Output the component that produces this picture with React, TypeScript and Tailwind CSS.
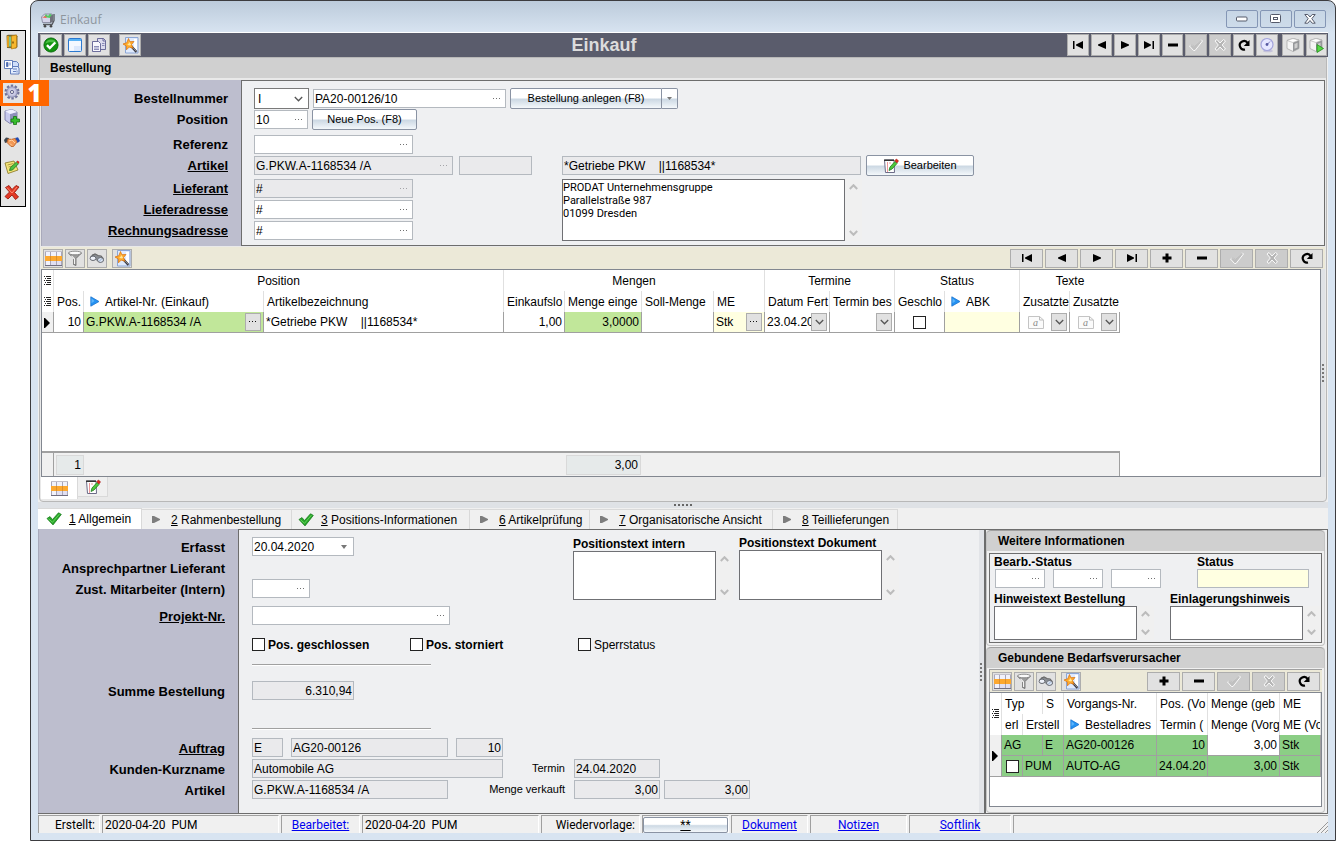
import type { ReactNode } from "react";

const arial = "font-['Liberation_Sans',Arial,sans-serif]";
const fieldBorder = "border border-[#b4b9bf]";

/* ---------- icons ---------- */

function Dots({ color = "#707070" }: { color?: string }) {
  return (
    <svg width="8" height="2" viewBox="0 0 8 2" fill={color} aria-hidden>
      <rect x="0" width="1" height="1" />
      <rect x="3" width="1" height="1" />
      <rect x="6" width="1" height="1" />
    </svg>
  );
}

function Chevron({ up = false, color = "#555", weight = "1.3" }: { up?: boolean; color?: string; weight?: string }) {
  return (
    <svg width="9" height="6" viewBox="0 0 9 6" fill="none" stroke={color} strokeWidth={weight} aria-hidden>
      <path d={up ? "M.8 5 4.5 1.2 8.2 5" : "M.8 1 4.5 4.8 8.2 1"} />
    </svg>
  );
}

function Nav({ kind }: { kind: string }) {
  const off = kind === "post" || kind === "cancel";
  return (
    <svg width="16" height="16" viewBox="0 0 16 16" fill={off ? "none" : "#000"} aria-hidden>
      {kind === "first" && <path d="M3 4h1.500v8H3zM13 4v8L6 8.500v-1z" />}
      {kind === "prev" && <path d="M12 4v8L4 8.500v-1z" />}
      {kind === "next" && <path d="M4 4v8l8-3.500v-1z" />}
      {kind === "last" && <path d="M11.500 4H13v8h-1.500zM3 4v8L10 8.500v-1z" />}
      {kind === "plus" && <path d="M6.500 3.500h3v3h3v3h-3v3h-3v-3h-3v-3h3z" />}
      {kind === "minus" && <path d="M3 6.500h10v3H3z" />}
      {kind === "post" && (
        <>
          <path d="m1.500 9 4 4.500h1.500L14.500 4l-1.500-1.500-6.500 7L4 7.500z" fill="#c0c0c0" stroke="#fafafa" />
          <path d="m2.500 8.500 1.500-1 2.500 2 6.500-7" stroke="#a0a0a0" strokeWidth=".7" />
        </>
      )}
      {kind === "cancel" && (
        <path d="m3 4 2-1.500L8 6l3.500-3.500L13.500 4 10.200 8l3.300 4-2 1.500L8 10l-3 3.500L3 12l3.300-4z" fill="#b6b6b6" stroke="#fafafa" />
      )}
      {kind === "refresh" && (
        <>
          <path d="M9 12.500A4.300 4.300 0 1 1 11.700 6" fill="none" stroke="#000" strokeWidth="2.200" />
          <path d="M13.500 3v6H7.800z" />
        </>
      )}
    </svg>
  );
}

function GridIcon() {
  return (
    <svg width="17" height="15" viewBox="0 0 17 15" aria-hidden>
      <path fill="#f1f2fb" d="M0 0h17v15H0z" />
      <path fill="#e0dff2" d="M12 10h5v5h-5zM6 10h5v5H6z" />
      <path fill="#fca82f" d="M0 5h17v5H0z" />
      <path d="M.5 0v5M5.500 0v5M11.500 0v5M16.500 0v5M.5 10v5M5.500 10v5M11.500 10v5M16.500 10v5" stroke="#a9a6b8" />
      <path d="M5.500 5v5M11.500 5v5" stroke="#dc8f2a" />
      <path d="M0 .5h17" stroke="#c2c0ca" />
      <path d="M0 14.500h17" stroke="#706e80" />
    </svg>
  );
}

function FunnelIcon() {
  return (
    <svg width="16" height="16" viewBox="0 0 16 16" aria-hidden>
      <path d="M1.500 3 6.500 8.500v6l2.500 1V8.500L14.500 3z" fill="#9d9d9d" stroke="#666" strokeWidth=".8" />
      <ellipse cx="8" cy="3" rx="6.500" ry="1.800" fill="#fafafa" stroke="#777" strokeWidth=".8" />
      <path d="m4.500 5.800 3 3.200v5" stroke="#f4f4f4" strokeWidth="1.200" fill="none" />
    </svg>
  );
}

function BinocularIcon() {
  return (
    <svg width="16" height="16" viewBox="0 0 16 16" aria-hidden>
      <path d="M1 6.500 4 4l8 2.500 3 4-4 2.500-5-3.500-3 1z" fill="#898d92" />
      <path d="m3 5.500 3-1.500 3 1.500 3 .5 2.500 3" fill="none" stroke="#666" strokeWidth="1.200" />
      <ellipse cx="4" cy="8.300" rx="2.900" ry="2.200" fill="#eef2fa" stroke="#5a5e65" strokeWidth=".9" />
      <ellipse cx="11.500" cy="10" rx="3" ry="2.400" fill="#dfe9f8" stroke="#5a5e65" strokeWidth=".9" />
      <path d="m10.500 11 2-2" stroke="#8fa9cd" />
    </svg>
  );
}

function WizardIcon() {
  return (
    <svg width="17" height="17" viewBox="0 0 17 17" aria-hidden>
      <path d="M3.500.5h12.500V16H3.500z" fill="#dfeafd" stroke="#8ba6d6" />
      <path d="M12 2h3v11h-3z" fill="#fff" />
      <path d="m9 9 5.500 6" stroke="#3a3a44" strokeWidth="2.300" />
      <path d="m9 9 5.500 5.500" stroke="#aaa" strokeWidth=".7" />
      <path d="m6.500 1.500 1.300 3.200L12 4.500 9.500 7.500l1.500 3.700-3.800-1.100-2.700 2.700-.1-3.900L1 7l3.800-1.300z" fill="#ffab2b" stroke="#dd7714" strokeWidth=".8" />
      <path d="m6.600 4.500.6 1.800-2 .9 1.800 1.200 2.200-.4L8 6z" fill="#ffe79a" />
    </svg>
  );
}

function OkIcon() {
  return (
    <svg width="16" height="16" viewBox="0 0 17 17" aria-hidden>
      <circle cx="8.500" cy="8.500" r="7.500" fill="#12930f" stroke="#056b0a" />
      <path d="M2.500 7a6.300 6.300 0 0 1 12 0c-3-2-8-2-12 0" fill="#58c94f" opacity=".8" />
      <path d="m4.200 8.700 3 3L13 5.800" fill="none" stroke="#fff" strokeWidth="2.500" />
    </svg>
  );
}

function FormIcon() {
  return (
    <svg width="16" height="16" viewBox="0 0 16 16" aria-hidden>
      <rect x="1.500" y="1.500" width="13" height="13" rx="1" fill="#f3f8ff" stroke="#2b78cf" />
      <path d="M2 2h12v2H2z" fill="#57b2f5" />
      <path d="M7 9h7v5H7z" fill="#dbe8fc" />
    </svg>
  );
}

function CopyIcon() {
  return (
    <svg width="16" height="16" viewBox="0 0 16 16" stroke="#5d5f92" strokeWidth=".9" aria-hidden>
      <path d="M6.500 1.500h6l2 2v9h-8z" fill="#dcdbee" />
      <path d="M12 1.500v2.500h2.500" fill="none" />
      <path d="M1.500 4.500h6l2 2v8h-8z" fill="#f7f7fd" />
      <path d="M3 9.500h5M3 11h5M3 12.500h5M11 6.500h2.500M11 8.500h2.500" fill="none" stroke="#8082b1" />
    </svg>
  );
}

function EditIcon() {
  return (
    <svg width="16" height="16" viewBox="0 0 16 16" aria-hidden>
      <path d="M1.500 2h9.500l.5 12.500h-9z" fill="#fff" stroke="#6c6c88" />
      <path d="M1 1.500h10v1.500H1z" fill="#333" />
      <path d="M4.500 4v10M7 4v2" stroke="#e99" />
      <path d="m6 12.500 1-3.500 5-5.500 2 2L9 11z" fill="#4fc83c" stroke="#1c7a1c" strokeWidth=".8" />
      <path d="m11.800 2.800 1.500-1.800 2.200 1.800L14 5z" fill="#e02b1b" stroke="#a31414" strokeWidth=".6" />
    </svg>
  );
}

function TickIcon() {
  return (
    <svg width="16" height="14" viewBox="0 0 16 14" aria-hidden>
      <path d="m1 6.500 3-1.900L6.500 7.500 12.500.8l2.800 1.600L7 12.900z" fill="#28a52a" stroke="#1a7d1e" strokeWidth=".8" />
      <path d="m2.500 6.700 4 3.600L13.400 2.200" fill="none" stroke="#6ad85f" strokeWidth=".9" />
    </svg>
  );
}

function BlueArrow() {
  return (
    <svg width="10" height="11" viewBox="0 0 10 11" className="inline-block shrink-0" aria-hidden>
      <path d="M.8.8 9 5.500.8 10.200z" fill="#2492f2" stroke="#1a74cf" strokeWidth=".8" />
      <path d="M1.500 2.200v5L4.500 5z" fill="#5db4fb" />
    </svg>
  );
}

function RowMarker() {
  return (
    <svg width="6" height="10" viewBox="0 0 6 10" className="inline-block" aria-hidden>
      <path d="M0 0h1l5 5-5 5H0z" />
    </svg>
  );
}

function ListIcon() {
  return (
    <svg width="7" height="10" viewBox="0 0 7 10" className="mx-auto" aria-hidden>
      <path d="M0 .5h1M2 .5h5M1 2.500h1M3 2.500h4M0 4.500h1M2 4.500h5M1 6.500h1M3 6.500h4M0 8.500h1M2 8.500h5" stroke="#222" />
    </svg>
  );
}

function Cube({ run = false }: { run?: boolean }) {
  return (
    <svg width="16" height="16" viewBox="0 0 16 16" aria-hidden>
      <path d="M2 3.500 8 1.500 14 3v8.500l-6 3-6-3z" fill="#f5f5f5" stroke="#aaa" strokeWidth=".8" />
      <path d="M8 5.500 14 3.300v8.200l-6 3z" fill="#96989b" />
      <path d="M2 3.500 8 5.500l6-2.300L8 1.500z" fill="#fff" stroke="#aaa" strokeWidth=".6" />
      <path d="M9.500 7 12.500 5.800v4.700l-3 1.300z" fill="#cfcfcf" />
      {run && <path d="M9 7.500 15.500 11.500 9 15.500z" fill="#55d944" stroke="#22891a" strokeWidth=".8" />}
    </svg>
  );
}

function ClockIcon() {
  return (
    <svg width="16" height="16" viewBox="0 0 16 16" aria-hidden>
      <ellipse cx="9" cy="14" rx="5" ry="1.300" fill="#c3c1d9" />
      <circle cx="8" cy="7.500" r="6" fill="#e6e7ff" stroke="#a3a4dc" strokeWidth="1.200" />
      <path d="M8 7.800 11 4.500" stroke="#8183c4" />
      <circle cx="8" cy="7.500" r="1.400" fill="#5759a1" />
    </svg>
  );
}

function AppIcon() {
  return (
    <svg width="16" height="16" viewBox="0 0 16 16" aria-hidden>
      <path d="M3 12.500h9l2-4V2" fill="none" stroke="#55575c" strokeWidth="1.300" />
      <path d="m1.500 5 3-3h7.500L10.500 10.500h-8z" fill="#d6d4ea" stroke="#7d7f94" strokeWidth=".8" />
      <path d="m4 5 2-3 2 2 2-2.500L12.500 4 10 6z" fill="#53c963" />
      <path d="m2 5.500 3.500-1.500 1.500 2z" fill="#ef6450" />
      <path d="m10 5 3-3v8l-3 1z" fill="#70727c" />
      <circle cx="5" cy="14.300" r="1.300" fill="#444" />
      <circle cx="11" cy="14.300" r="1.300" fill="#444" />
    </svg>
  );
}

function DoorIcon() {
  return (
    <svg width="16" height="16" viewBox="0 0 16 16" aria-hidden>
      <path d="M2.500 1.500 4 .7h8.500l1 1.500V13L12 14.500 3 14z" fill="#7a6a30" />
      <path d="M5 2.500h6v10H5z" fill="#7fc48b" />
      <path d="m7.500 2 5-1v12.500l-5 1.500z" fill="#f7b72d" stroke="#b97d0d" strokeWidth=".7" />
      <path d="M3 2h2v11H3z" fill="#dc9d20" />
      <path d="M9 7.500v2" stroke="#6b4806" strokeWidth="1.300" />
    </svg>
  );
}

function LayoutIcon() {
  return (
    <svg width="16" height="16" viewBox="0 0 16 16" stroke="#5573b5" strokeWidth=".9" aria-hidden>
      <path d="M6.500 6.500h6l2.500 2.500v6H6.500z" fill="#e2edff" />
      <path d="M8.500 2.500h4l2 2v3h-6z" fill="#cfdefa" />
      <path d="M.5 1.500h8v8h-8z" fill="#fff" />
      <path d="M2.500 3.500h1.500v4H2.500zM6 3.500v3M9 10h4M9 12.500h3M13 11.500v2" fill="#4b67ac" />
    </svg>
  );
}

function GearIcon() {
  return (
    <svg width="16" height="16" viewBox="0 0 16 16" aria-hidden>
      <circle cx="8" cy="8" r="6.400" fill="none" stroke="#70739b" strokeWidth="2.200" strokeDasharray="2.400 1.620" />
      <circle cx="8" cy="8" r="5.300" fill="#b9bad8" stroke="#7c7fa8" strokeWidth=".8" />
      <circle cx="8" cy="8" r="3.500" fill="#cdcde6" />
      <circle cx="8" cy="8" r="1.600" fill="#ececec" stroke="#63658c" />
    </svg>
  );
}

function BoxAddIcon() {
  return (
    <svg width="16" height="16" viewBox="0 0 16 16" aria-hidden>
      <path d="m1 2 7-1.500L13 3v9l-7 2.500L1 11z" fill="#c7c9ed" stroke="#6f70a0" strokeWidth=".8" />
      <path d="m6 5 7-2v9l-7 2.500z" fill="#8f90bb" />
      <path d="M1 2 6 5l7-2-5-2.500z" fill="#f0f0ff" />
      <path d="M9.500 7.500h3v2.500H15.500v3h-3v2.500h-3v-2.500H7v-3h2.500z" fill="#37bd2d" stroke="#187413" strokeWidth=".8" />
    </svg>
  );
}

function HandshakeIcon() {
  return (
    <svg width="16" height="16" viewBox="0 0 16 16" aria-hidden>
      <path d="m0 6 2-2.500 3 .5L4 8 1 9z" fill="#3f464e" />
      <path d="m11 4 3-.7L16 7l-2.500 2z" fill="#214bb2" />
      <path d="m4 5 3.500.3L11 4.500 13 8l-3.500 4.500H7L3 8.500z" fill="#f29856" stroke="#b95d23" strokeWidth=".8" />
      <path d="m5 7 3-1 3 3M6 9.500l2 2" fill="none" stroke="#ffd0a0" />
    </svg>
  );
}

function NotesIcon() {
  return (
    <svg width="16" height="16" viewBox="0 0 16 16" aria-hidden>
      <path d="m1 4 9-2 4 9-10 3.500z" fill="#f5e579" stroke="#86731f" strokeWidth=".8" />
      <path d="m3.500 6 6-1.500M4.500 8 10 6.500M5.500 10l5-1.500" stroke="#9a8732" strokeWidth=".8" />
      <path d="m5.500 11.500 1-3L12.500 3l2 1.700L8.500 11z" fill="#4fc142" stroke="#24791e" strokeWidth=".8" />
      <path d="m12.500 3 1-1.500 2 1.500-1 1.700z" fill="#d92a18" />
    </svg>
  );
}

function DeleteIcon() {
  return (
    <svg width="16" height="16" viewBox="0 0 16 16" aria-hidden>
      <path d="M1.500 3.500 5 1.500l3 4 4-4 3 1.500-4.500 5.500 4 4.500-3 2.500L8 11l-4 4-3-2.500L5.500 8z" fill="#e33925" stroke="#9b1c10" strokeWidth=".9" />
      <path d="M3 3.500 8 9l5-6" fill="none" stroke="#ff8a70" />
    </svg>
  );
}

function TextSheetIcon() {
  return (
    <svg width="16" height="13" viewBox="0 0 16 13" aria-hidden>
      <path d="M.5.5h11l4 3.500v8.500H.5z" fill="#fbfbfb" stroke="#c4c4c4" />
      <path d="M11.500.5V4h4" fill="none" stroke="#bcbcbc" />
      <text x="5" y="10" fontSize="10" fontStyle="italic" fontFamily="Liberation Serif, serif" fill="#888">
        a
      </text>
    </svg>
  );
}

/* ---------- form parts ---------- */

type FieldProps = {
  id?: string;
  name?: string;
  value?: string;
  width: string;
  dots?: boolean;
  readOnly?: boolean;
  right?: boolean;
  bg?: string;
};

function Field({ id, name, value = "", width, dots, readOnly, right, bg }: FieldProps) {
  return (
    <div className={`flex h-[19px] shrink-0 items-center ${fieldBorder} ${width} ${bg ?? (readOnly ? "bg-[#eaeaec]" : "bg-white")}`}>
      <input
        id={id}
        aria-label={name}
        defaultValue={value}
        readOnly={readOnly}
        className={`h-full w-full min-w-0 flex-1 bg-transparent px-px text-xs text-black outline-none ${right ? "text-right" : ""}`}
      />
      {dots && (
        <button type="button" aria-label="Auswahl" className="flex h-full w-4 shrink-0 items-center justify-center">
          <Dots color={readOnly ? "#a4a4a8" : "#707070"} />
        </button>
      )}
    </div>
  );
}

function Memo({ id, name, value = "", width, height }: { id?: string; name?: string; value?: string; width: string; height: string }) {
  return (
    <div className={`flex ${height}`}>
      <textarea
        id={id}
        aria-label={name}
        defaultValue={value}
        className={`${width} h-full resize-none overflow-hidden border border-[#6f7074] bg-white pt-px font-['Roboto',sans-serif] text-[11px] leading-[13px] text-black outline-none`}
      />
      <div className="flex w-[17px] flex-col items-center justify-between bg-[#f0f0f0] py-[5px]">
        <Chevron up color="#bcbcbc" weight="2" />
        <Chevron color="#bcbcbc" weight="2" />
      </div>
    </div>
  );
}

function LabelColumn({ rows }: { rows: { text: string; gap: string; target?: string; link?: boolean }[] }) {
  return (
    <div className="flex w-[200px] shrink-0 flex-col items-end border-l border-[#a9aabb] bg-[#bdbece] pt-[9px] pr-[13px] text-[13px] font-bold">
      {rows.map((r) => (
        <div key={r.text} className={`flex h-[19px] items-center ${r.gap}`}>
          {r.link ? (
            <a href="#" className="underline">
              {r.text}
            </a>
          ) : (
            <label htmlFor={r.target}>{r.text}</label>
          )}
        </div>
      ))}
    </div>
  );
}

function GlossButton({ className, children }: { className: string; children: ReactNode }) {
  return (
    <button
      type="button"
      className={`flex h-[21px] items-center justify-center rounded-xs border border-[#8a93a3] bg-linear-to-b from-white from-45% via-[#cdd9e4] via-55% to-[#f4f8fb] text-[11px] ${className}`}
    >
      {children}
    </button>
  );
}

function ToolButton({ className = "", off = false, label, children }: { className?: string; off?: boolean; label: string; children: ReactNode }) {
  return (
    <button
      type="button"
      aria-label={label}
      disabled={off}
      className={`flex items-center justify-center overflow-hidden border border-[#adadad] ${off ? "bg-[#cccccc]" : "bg-[#e1e1e1]"} ${className}`}
    >
      {children}
    </button>
  );
}

function GridToolbar({ nav }: { nav: string[] }) {
  return (
    <div className="flex h-[22px] items-center justify-between bg-[#ece9d8] px-0.5">
      <div className="flex gap-0.5">
        <ToolButton label="Tabelle" className="h-[19px] w-5"><GridIcon /></ToolButton>
        <ToolButton label="Filter" className="h-[19px] w-5"><FunnelIcon /></ToolButton>
        <ToolButton label="Suchen" className="h-[19px] w-5"><BinocularIcon /></ToolButton>
        <ToolButton label="Assistent" className="ml-[3px] h-[19px] w-5"><WizardIcon /></ToolButton>
      </div>
      <div className="flex gap-0.5">
        {nav.map((k) => (
          <ToolButton key={k} label={k} off={k === "post" || k === "cancel"} className="h-[19px] w-[33px]">
            <Nav kind={k} />
          </ToolButton>
        ))}
      </div>
    </div>
  );
}

function SectionTitle({ children }: { children: ReactNode }) {
  return (
    <h2 className="flex h-[21px] items-center rounded-t-sm border-t border-[#a0a0a0] bg-[#d0d0d0] pl-[11px] text-xs font-bold">
      {children}
    </h2>
  );
}

const box = "size-[13px] shrink-0 appearance-none border border-[#222] bg-white";

function Check({ label, bold = false, className = "" }: { label: string; bold?: boolean; className?: string }) {
  return (
    <label className={`flex items-center gap-[3px] text-xs ${bold ? "font-bold" : ""} ${className}`}>
      <input type="checkbox" className={box} />
      {label}
    </label>
  );
}

function Rule() {
  return <hr className="h-0.5 w-[179px] border-0 border-t border-[#a0a0a0] bg-white" />;
}

/* ---------- sections ---------- */

const sideTools = [
  { label: "Schließen", icon: <DoorIcon /> },
  { label: "Layout", icon: <LayoutIcon /> },
  { label: "Einstellungen", icon: <GearIcon />, badge: "1" },
  { label: "Artikel anlegen", icon: <BoxAddIcon /> },
  { label: "Partner", icon: <HandshakeIcon /> },
  { label: "Notizen", icon: <NotesIcon /> },
  { label: "Löschen", icon: <DeleteIcon /> },
];

function SideStrip() {
  return (
    <aside className="mt-[30px] w-[26px] border border-black bg-[#e4e4e4]">
      {sideTools.map((t) => (
        <div key={t.label} className="relative h-[25px]">
          <button type="button" aria-label={t.label} className="flex size-full items-center justify-center pr-0.5 pb-[3px]">
            {t.icon}
          </button>
          {t.badge && (
            <div className="pointer-events-none absolute -left-px -top-px z-10 flex h-[26px] w-[49px] border-3 border-[#ff6600]">
              <span className="w-5 shrink-0" />
              <span className="flex flex-1 items-center justify-center bg-[#ff6600] font-['Open_Sans',sans-serif] text-2xl leading-none font-extrabold text-white">
                {t.badge}
              </span>
            </div>
          )}
        </div>
      ))}
    </aside>
  );
}

function TitleBar() {
  const cap = "flex h-[18px] w-8 items-center justify-center rounded-xs border border-[#8496b5] bg-[#c9d8e8]/60";
  return (
    <header className="flex h-[31px] items-center justify-between pr-0.5 pl-0.5">
      <div className="flex items-center gap-1 pt-1.5 font-['Open_Sans',sans-serif] text-xs text-[#8d959d]">
        <AppIcon />
        <span>Einkauf</span>
      </div>
      <div className="flex gap-0.5 pt-[5px]">
        <button type="button" aria-label="Minimieren" className={cap}>
          <svg width="12" height="6" viewBox="0 0 12 6" aria-hidden><rect x=".5" y="1" width="10.500" height="4" rx="1" fill="#fff" stroke="#555a6a" /></svg>
        </button>
        <button type="button" aria-label="Maximieren" className={cap}>
          <svg width="12" height="10" viewBox="0 0 12 10" fill="#fff" stroke="#555a6a" aria-hidden><rect x=".5" y=".5" width="10" height="8" rx="1" /><rect x="3.500" y="3.500" width="4" height="2" /></svg>
        </button>
        <button type="button" aria-label="Schließen" className={cap}>
          <svg width="12" height="10" viewBox="0 0 12 10" fill="#fff" stroke="#555a6a" aria-hidden><path d="M.8.5h3L6 3 8.200.5h3L7.800 4.700l3.400 4.500h-3L6 6.500 3.800 9.200h-3L4.200 4.700z" /></svg>
        </button>
      </div>
    </header>
  );
}

function MainToolbar() {
  const nav = ["first", "prev", "next", "last", "minus", "post", "cancel", "refresh"];
  return (
    <div className="flex h-[25px] items-center border-t border-white bg-[#5a5c6c] pr-px pl-0.5">
      <div className="flex gap-0.5">
        <ToolButton label="OK" className="size-[22px]"><OkIcon /></ToolButton>
        <ToolButton label="Formular" className="size-[22px]"><FormIcon /></ToolButton>
        <ToolButton label="Kopieren" className="size-[22px]"><CopyIcon /></ToolButton>
        <ToolButton label="Assistent" className="ml-[7px] size-[22px]"><WizardIcon /></ToolButton>
      </div>
      <h1 className="flex-1 text-center text-lg leading-6 font-bold text-[#dcdcdc]">Einkauf</h1>
      <div className="flex w-[260px] gap-1">
        <div className="flex w-[211px] gap-0.5">
          {nav.map((k) => (
            <ToolButton key={k} label={k} off={k === "post" || k === "cancel"} className="h-[22px] flex-1">
              <Nav kind={k} />
            </ToolButton>
          ))}
          <ToolButton label="Historie" className="h-[22px] flex-1"><ClockIcon /></ToolButton>
        </div>
        <div className="flex flex-1 gap-0.5">
          <ToolButton label="Lager" className="h-[22px] flex-1"><Cube /></ToolButton>
          <ToolButton label="Lager buchen" className="h-[22px] flex-1"><Cube run /></ToolButton>
        </div>
      </div>
    </div>
  );
}

function OrderForm() {
  return (
    <section className="flex">
      <LabelColumn
        rows={[
          { text: "Bestellnummer", gap: "", target: "bestellnr" },
          { text: "Position", gap: "mt-0.5", target: "position" },
          { text: "Referenz", gap: "mt-1.5", target: "referenz" },
          { text: "Artikel", gap: "mt-0.5", link: true },
          { text: "Lieferant", gap: "mt-1", link: true },
          { text: "Lieferadresse", gap: "mt-0.5", link: true },
          { text: "Rechnungsadresse", gap: "mt-0.5", link: true },
        ]}
      />
      <div className="flex flex-1 flex-col border border-[#6d6d6d] bg-[#eff0f2] pt-2 pb-1 pl-3">
        <div className="flex h-[19px] items-center gap-1">
          <div className="relative flex w-[55px] items-center">
            <select aria-label="Belegart" className="h-[21px] w-full appearance-none border border-[#7a7a7a] bg-white px-[3px] text-xs outline-none">
              <option>I</option>
            </select>
            <span className="pointer-events-none absolute right-1.5"><Chevron /></span>
          </div>
          <Field id="bestellnr" value="PA20-00126/10" width="w-[193px]" dots />
          <div className="flex">
            <GlossButton className="w-[152px] rounded-r-none">Bestellung anlegen (F8)</GlossButton>
            <GlossButton className="w-4 rounded-l-none border-l-0">
              <svg width="5" height="3" viewBox="0 0 5 3" fill="#777" aria-label="Optionen"><path d="M0 0h5L2.500 3z" /></svg>
            </GlossButton>
          </div>
        </div>
        <div className="mt-0.5 flex h-[19px] items-center gap-1">
          <Field id="position" value="10" width="w-[54px]" dots />
          <GlossButton className="w-[105px]">Neue Pos. (F8)</GlossButton>
        </div>
        <div className="mt-1.5 flex">
          <Field id="referenz" width="w-[159px]" dots />
        </div>
        <div className="mt-0.5 flex h-[19px] items-center">
          <Field name="Artikel" value="G.PKW.A-1168534 /A" width="w-[199px]" readOnly dots />
          <div className="ml-1.5"><Field name="Index" width="w-[73px]" readOnly /></div>
          <div className="ml-[30px]"><Field name="Artikelbezeichnung" value="*Getriebe PKW    ||1168534*" width="w-[299px]" readOnly /></div>
          <GlossButton className="ml-[5px] w-[108px] gap-1">
            <EditIcon />
            Bearbeiten
          </GlossButton>
        </div>
        <div className="mt-1 flex gap-[149px]">
          <div className="flex flex-col gap-0.5">
            <Field name="Lieferant" value="#" width="w-[159px]" readOnly dots />
            <Field name="Lieferadresse" value="#" width="w-[159px]" dots />
            <Field name="Rechnungsadresse" value="#" width="w-[159px]" dots />
          </div>
          <Memo name="Anschrift" value={"PRODAT Unternehmensgruppe\nParallelstraße 987\n01099 Dresden"} width="w-[283px]" height="h-[62px]" />
        </div>
      </div>
    </section>
  );
}

const headBase = "h-[21px] border-r border-[#e0e0e0] p-0 px-[3px] font-normal whitespace-nowrap overflow-hidden";
const head = `${headBase} text-left`;
const groupHead = `${headBase} text-center`;
const cell = "h-[21px] border-r border-b border-[#a0a0a0] p-0 px-0.5 whitespace-nowrap overflow-hidden";

function CellButton({ drop = false }: { drop?: boolean }) {
  return (
    <button
      type="button"
      aria-label="Auswahl"
      className="flex h-[18px] w-4 shrink-0 items-center justify-center border border-[#adadad] bg-[#e1e1e1]"
    >
      {drop ? <Chevron /> : <Dots color="#111" />}
    </button>
  );
}

function PositionGrid() {
  const columns = ["Einkaufslo", "Menge einge", "Soll-Menge", "ME", "Datum Fert", "Termin bes", "Geschlo"];
  return (
    <div className="flex flex-1 flex-col border border-[#828790] bg-white">
      <table className="w-[1078px] table-fixed border-separate border-spacing-0 text-xs">
        <colgroup>
          <col className="w-3" /><col className="w-[30px]" /><col className="w-[180px]" /><col className="w-[240px]" />
          <col className="w-[61px]" /><col className="w-[77px]" /><col className="w-[72px]" /><col className="w-[51px]" />
          <col className="w-[65px]" /><col className="w-[65px]" /><col className="w-[50px]" /><col className="w-[75px]" />
          <col className="w-[50px]" /><col className="w-[50px]" />
        </colgroup>
        <thead>
          <tr>
            <th className="border-r border-[#e0e0e0] p-0"><ListIcon /></th>
            <th colSpan={3} className={groupHead}>Position</th>
            <th colSpan={4} className={groupHead}>Mengen</th>
            <th colSpan={2} className={groupHead}>Termine</th>
            <th colSpan={2} className={groupHead}>Status</th>
            <th colSpan={2} className="h-[21px] p-0 text-center font-normal">Texte</th>
          </tr>
          <tr>
            <th className="border-r border-[#e0e0e0] p-0"><ListIcon /></th>
            <th className={head}>Pos.</th>
            <th className={head}><span className="flex items-center gap-[5px] pl-[3px]"><BlueArrow />Artikel-Nr. (Einkauf)</span></th>
            <th className={head}>Artikelbezeichnung</th>
            {columns.map((c) => (
              <th key={c} className={head}>{c}</th>
            ))}
            <th className={head}><span className="flex items-center gap-[5px] pl-[3px]"><BlueArrow />ABK</span></th>
            <th className={head}>Zusatzte</th>
            <th className="p-0 pr-0.5 pl-[3px] text-left font-normal">Zusatzte</th>
          </tr>
        </thead>
        <tbody>
          <tr>
            <td className={`${cell} bg-[#f0f0f0]`}><RowMarker /></td>
            <td className={`${cell} text-right`}>10</td>
            <td className={`${cell} bg-[#c1e79a]`}>
              <div className="flex items-center justify-between">G.PKW.A-1168534 /A<CellButton /></div>
            </td>
            <td className={`${cell} whitespace-pre`}>{"*Getriebe PKW    ||1168534*"}</td>
            <td className={`${cell} text-right`}>1,00</td>
            <td className={`${cell} bg-[#c1e79a] text-right`}>3,0000</td>
            <td className={cell} />
            <td className={`${cell} bg-[#ffffe1]`}>
              <div className="flex items-center justify-between">Stk<CellButton /></div>
            </td>
            <td className={cell}>
              <div className="flex items-center">
                <span className="min-w-0 flex-1 overflow-hidden">23.04.20</span>
                <CellButton drop />
              </div>
            </td>
            <td className={cell}><div className="flex justify-end"><CellButton drop /></div></td>
            <td className={cell}>
              <input type="checkbox" aria-label="Geschlossen" className={`${box} mx-auto block`} />
            </td>
            <td className={`${cell} bg-[#ffffe1]`} />
            {["intern", "extern"].map((t) => (
              <td key={t} className={cell}>
                <div className="flex items-center justify-end gap-[7px]"><TextSheetIcon /><CellButton drop /></div>
              </td>
            ))}
          </tr>
        </tbody>
      </table>
      <div className="flex-1" />
      <div className="flex h-[25px] w-[1078px] items-center border-t-2 border-r border-[#a0a0a0] bg-[#f0f0f0] text-xs">
        <span className="h-full w-3 border-r border-[#a0a0a0]" />
        <span className="ml-0.5 flex h-5 w-7 items-center justify-end border border-[#d9d9d9] bg-[#e6eaea] pr-0.5">1</span>
        <span className="ml-[482px] flex h-5 w-[75px] items-center justify-end border border-[#d9d9d9] bg-[#e6eaea] pr-0.5">3,00</span>
      </div>
    </div>
  );
}

const tabs = [
  { key: "1", text: "Allgemein", done: true, active: true, width: "w-[104px]" },
  { key: "2", text: "Rahmenbestellung", done: false, width: "w-[150px]" },
  { key: "3", text: "Positions-Informationen", done: true, width: "w-[178px]" },
  { key: "6", text: "Artikelprüfung", done: false, width: "w-[120px]" },
  { key: "7", text: "Organisatorische Ansicht", done: false, width: "w-[183px]" },
  { key: "8", text: "Teillieferungen", done: false, width: "w-[125px]" },
];

function DetailTabs() {
  return (
    <nav role="tablist" className="flex h-[21px] items-end text-xs">
      {tabs.map((t) => (
        <button
          key={t.key}
          type="button"
          role="tab"
          aria-selected={!!t.active}
          className={`flex items-center border-t border-r border-[#d9d9d9] whitespace-nowrap ${t.width} ${t.active ? "h-full bg-white pl-2" : "h-5 bg-[#f0f0f0] pl-1.5"}`}
        >
          <span className="flex w-[23px] shrink-0 items-center">
            {t.done ? (
              <TickIcon />
            ) : (
              <svg width="8" height="7" viewBox="0 0 8 7" fill="#7d7d7d" className="ml-1" aria-hidden><path d="M0 0h2l6 3v1L2 7H0z" /></svg>
            )}
          </span>
          <span><span className="underline">{t.key}</span> {t.text}</span>
        </button>
      ))}
    </nav>
  );
}

function GeneralForm() {
  return (
    <div className="flex flex-1 flex-col border-t border-l border-[#6d6d6d] bg-[#eff0f2] pt-[7px] pr-1 pb-3.5 pl-[13px]">
      <div className="flex">
        <div className="w-[321px] shrink-0">
          <div className={`flex h-[19px] w-[102px] items-center bg-white ${fieldBorder}`}>
            <input id="erfasst" defaultValue="20.04.2020" className="w-full min-w-0 flex-1 bg-transparent px-px text-xs outline-none" />
            <button type="button" aria-label="Kalender" className="flex w-[18px] justify-center">
              <svg width="6" height="4" viewBox="0 0 6 4" fill="#777" aria-hidden><path d="M0 0h6L3 4z" /></svg>
            </button>
          </div>
          <div className="mt-[23px]"><Field id="mitarbeiter" width="w-[58px]" dots /></div>
          <div className="mt-2"><Field name="Projekt-Nr." width="w-[198px]" dots /></div>
        </div>
        <div className="flex gap-1.5 text-xs leading-[13px] font-bold">
          <div className="pt-px">
            <label htmlFor="text-intern" className="block">Positionstext intern</label>
            <Memo id="text-intern" width="w-[143px]" height="h-[49px]" />
          </div>
          <div>
            <label htmlFor="text-dokument" className="block pb-px leading-[12px]">Positionstext Dokument</label>
            <Memo id="text-dokument" width="w-[143px]" height="h-[50px]" />
          </div>
        </div>
      </div>
      <div className="mt-2.5 flex h-[19px] items-center">
        <Check label="Pos. geschlossen" bold className="w-[158px]" />
        <Check label="Pos. storniert" bold className="w-[168px]" />
        <Check label="Sperrstatus" />
      </div>
      <div className="mt-2.5"><Rule /></div>
      <div className="mt-[15px]"><Field id="summe" value="6.310,94" width="w-[102px]" readOnly right /></div>
      <div className="mt-7"><Rule /></div>
      <div className="mt-2 flex gap-2">
        <Field name="Auftragsart" value="E" width="w-[31px]" readOnly />
        <Field name="Auftrag" value="AG20-00126" width="w-[157px]" readOnly />
        <Field name="Auftragsposition" value="10" width="w-[47px]" readOnly right />
      </div>
      <div className="mt-0.5 flex items-center text-[11px]">
        <Field id="kunde" value="Automobile AG" width="w-[251px]" readOnly />
        <label htmlFor="termin" className="mr-[9px] w-[62px] text-right">Termin</label>
        <Field id="termin" value="24.04.2020" width="w-[86px]" readOnly />
      </div>
      <div className="mt-0.5 flex items-center text-[11px]">
        <Field id="artikel" value="G.PKW.A-1168534 /A" width="w-[196px]" readOnly />
        <label htmlFor="menge" className="mr-[9px] w-[117px] text-right">Menge verkauft</label>
        <Field id="menge" value="3,00" width="w-[86px]" readOnly right />
        <div className="ml-1"><Field name="Menge gesamt" value="3,00" width="w-[86px]" readOnly right /></div>
      </div>
    </div>
  );
}

function FurtherInfo() {
  return (
    <section className="rounded-sm border border-t-0 border-[#c4c4c4] bg-[#f0f0f0] pb-0.5">
      <SectionTitle>Weitere Informationen</SectionTitle>
      <div className="mx-0.5 mt-0.5 border border-[#6d6d6d] bg-[#eff0f2] px-1 pt-px pb-0.5 text-xs leading-[14px] font-bold">
        <div className="flex">
          <div className="w-[203px]">
            <label htmlFor="bearb-status" className="block">Bearb.-Status</label>
            <div className="flex gap-2 pl-px font-normal">
              <Field id="bearb-status" width="w-[50px]" dots />
              <Field name="Bearb.-Status 2" width="w-[50px]" dots />
              <Field name="Bearb.-Status 3" width="w-[50px]" dots />
            </div>
          </div>
          <div>
            <label htmlFor="status" className="block">Status</label>
            <Field id="status" width="w-[112px]" bg="bg-[#ffffe1]" />
          </div>
        </div>
        <div className="mt-1 flex gap-4">
          <div>
            <label htmlFor="hinweis" className="block">Hinweistext Bestellung</label>
            <Memo id="hinweis" width="w-[143px]" height="h-[34px]" />
          </div>
          <div>
            <label htmlFor="einlagerung" className="block">Einlagerungshinweis</label>
            <Memo id="einlagerung" width="w-[133px]" height="h-[34px]" />
          </div>
        </div>
      </div>
    </section>
  );
}

function DemandGrid() {
  const green = `${cell} bg-[#8bce85]`;
  return (
    <section className="mt-px flex flex-1 flex-col rounded-sm border border-t-0 border-[#c4c4c4] bg-[#f0f0f0] pb-[5px]">
      <SectionTitle>Gebundene Bedarfsverursacher</SectionTitle>
      <div className="mx-0.5 mt-px flex flex-1 flex-col">
        <div className="border-t border-l border-[#a0a0a0]">
          <GridToolbar nav={["plus", "minus", "post", "cancel", "refresh"]} />
        </div>
        <div className="flex-1 overflow-hidden border border-[#828790] bg-white">
          <table className="w-full table-fixed border-separate border-spacing-0 text-xs">
            <colgroup>
              <col className="w-3" /><col className="w-[21px]" /><col className="w-5" /><col className="w-[21px]" />
              <col className="w-[93px]" /><col className="w-[51px]" /><col className="w-[72px]" /><col />
            </colgroup>
            <thead>
              <tr>
                <th rowSpan={2} className="border-r border-[#e0e0e0] p-0"><ListIcon /></th>
                <th colSpan={2} className={head}>Typ</th>
                <th className={head}>S</th>
                <th className={head}>Vorgangs-Nr.</th>
                <th className={head}>Pos. (Vo</th>
                <th className={head}>Menge (geb</th>
                <th className={head}>ME</th>
              </tr>
              <tr>
                <th className={head}>erl</th>
                <th colSpan={2} className={head}>Erstell</th>
                <th className={head}><span className="flex items-center gap-[5px] pl-[3px]"><BlueArrow />Bestelladres</span></th>
                <th className={head}>Termin (</th>
                <th className={head}>Menge (Vorg</th>
                <th className={head}>ME (Vo</th>
              </tr>
            </thead>
            <tbody>
              <tr>
                <td rowSpan={2} className={`${cell} bg-[#f0f0f0]`}><RowMarker /></td>
                <td colSpan={2} className={green}>AG</td>
                <td className={green}>E</td>
                <td className={green}>AG20-00126</td>
                <td className={`${green} text-right`}>10</td>
                <td className={`${cell} bg-white text-right`}>3,00</td>
                <td className={green}>Stk</td>
              </tr>
              <tr>
                <td className={green}><input type="checkbox" aria-label="erledigt" className={`${box} mx-auto block`} /></td>
                <td colSpan={2} className={green}>PUM</td>
                <td className={green}>AUTO-AG</td>
                <td className={green}>24.04.20</td>
                <td className={`${green} text-right`}>3,00</td>
                <td className={green}>Stk</td>
              </tr>
            </tbody>
          </table>
        </div>
      </div>
    </section>
  );
}

function StatusBar() {
  const slot = "flex h-[18px] shrink-0 items-center border-t border-l border-t-[#a0a0a0] border-l-[#a0a0a0] border-r border-r-white";
  const link = "text-[#0000ee] underline";
  return (
    <footer className="flex gap-0.5 pt-px font-['Roboto',sans-serif] text-xs">
      <span className={`${slot} w-[62px] justify-end pr-1`}>Erstellt:</span>
      <span className={`${slot} w-[177px] pl-0.5 whitespace-pre`}>{"2020-04-20  PUM"}</span>
      <span className={`${slot} w-[79px] justify-center`}><a href="#" className={link}>Bearbeitet:</a></span>
      <span className={`${slot} w-[177px] pl-0.5 whitespace-pre`}>{"2020-04-20  PUM"}</span>
      <span className={`${slot} w-[99px] justify-end pr-1`}>Wiedervorlage:</span>
      <span className={`${slot} w-[87px]`}>
        <button type="button" className="flex h-4 w-full items-center justify-center rounded-xs border border-[#8a93a3] bg-linear-to-b from-white from-45% via-[#cdd9e4] via-55% to-[#f4f8fb] underline">
          **
        </button>
      </span>
      <span className={`${slot} w-[77px] justify-center`}><a href="#" className={link}>Dokument</a></span>
      <span className={`${slot} w-[97px] justify-center`}><a href="#" className={link}>Notizen</a></span>
      <span className={`${slot} w-[102px] justify-center`}><a href="#" className={link}>Softlink</a></span>
      <span className="flex h-[18px] flex-1 items-end justify-end border-t border-l border-[#a0a0a0]">
        <svg width="12" height="12" viewBox="0 0 12 12" stroke="#999" aria-hidden><path d="M1 12 12 1M5 12l7-7M9 12l3-3" /></svg>
      </span>
    </footer>
  );
}

export default function App() {
  return (
    <div className={`flex min-h-screen items-stretch bg-white text-black ${arial}`}>
      <div className="w-[30px] shrink-0">
        <SideStrip />
      </div>
      <div className="flex min-w-0 flex-1 flex-col rounded-t-lg border border-[#3c3c3f] bg-[#d8e4f1] bg-linear-to-b from-[#bccbdb] to-[#d8e4f1] to-[32px] px-[7px] pb-[7px]">
        <TitleBar />
        <main className="flex flex-1 flex-col bg-[#f0f0f0]">
          <MainToolbar />
          <div className="mx-px flex flex-1 flex-col rounded-b-sm border border-[#b8b8b8] bg-[#e9e9e9] pb-px">
            <h2 className="flex h-5 items-center bg-[#d0d0d0] pl-2.5 text-xs font-bold">Bestellung</h2>
            <div className="mr-px mt-0.5 ml-px flex flex-1 flex-col">
              <OrderForm />
              <div className="pt-px"><GridToolbar nav={["first", "prev", "next", "last", "plus", "minus", "post", "cancel", "refresh"]} /></div>
              <div className="flex flex-1">
                <PositionGrid />
                <div className="flex w-1 items-center justify-center bg-[#dfe2e6]">
                  <svg width="4" height="18" viewBox="0 0 4 18" stroke="#777" aria-hidden><path d="M2 0v18" strokeWidth="2" strokeDasharray="2 2" /></svg>
                </div>
              </div>
              <div className="flex h-[23px] items-start">
                <button type="button" aria-label="Tabellenansicht" className="flex h-[22px] w-[37px] items-center justify-center border-r border-[#d9d9d9] bg-white"><GridIcon /></button>
                <button type="button" aria-label="Formularansicht" className="flex h-5 w-[30px] items-center justify-center border-r border-b border-[#d9d9d9] bg-[#f0f0f0]"><EditIcon /></button>
              </div>
            </div>
          </div>
          <div className="flex h-[6px] items-center justify-center bg-[#dfe2e6]">
            <svg width="19" height="2" viewBox="0 0 19 2" stroke="#666" aria-hidden><path d="M0 1h19" strokeWidth="2" strokeDasharray="2 2" /></svg>
          </div>
          <DetailTabs />
          <div className="flex border-b border-[#6d6d6d]">
            <LabelColumn
              rows={[
                { text: "Erfasst", gap: "", target: "erfasst" },
                { text: "Ansprechpartner Lieferant", gap: "mt-0.5" },
                { text: "Zust. Mitarbeiter (Intern)", gap: "mt-0.5", target: "mitarbeiter" },
                { text: "Projekt-Nr.", gap: "mt-2", link: true },
                { text: "Summe Bestellung", gap: "mt-14", target: "summe" },
                { text: "Auftrag", gap: "mt-[38px]", link: true },
                { text: "Kunden-Kurzname", gap: "mt-0.5", target: "kunde" },
                { text: "Artikel", gap: "mt-0.5", target: "artikel" },
              ]}
            />
            <GeneralForm />
            <div className="flex w-[7px] items-center border-t border-r-2 border-[#6d6d6d] bg-[#e2e4e8]">
              <svg width="4" height="18" viewBox="0 0 4 18" stroke="#777" aria-hidden><path d="M2 0v18" strokeWidth="2" strokeDasharray="2 2" /></svg>
            </div>
            <div className="flex w-[342px] flex-col border-t border-r border-[#6d6d6d] bg-[#f0f0f0] pr-0.5">
              <FurtherInfo />
              <DemandGrid />
            </div>
          </div>
          <StatusBar />
        </main>
      </div>
    </div>
  );
}
